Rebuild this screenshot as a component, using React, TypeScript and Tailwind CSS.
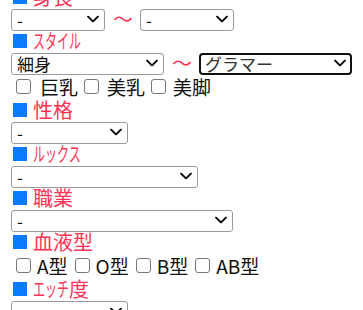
import React from "react";

const Heading = ({ children }: { children: React.ReactNode }) => (
  <div className="flex items-center h-[22px] pl-[13px]">
    <span className="block w-[14px] h-[14px] bg-[#0a7aff]" />
    <span className="ml-[6px] flex items-center text-[20px] leading-[22px] text-[#ff3355]">{children}</span>
  </div>
);

const Chevron = () => (
  <svg
    className="pointer-events-none absolute right-[6px] top-1/2 -translate-y-1/2"
    width="12"
    height="7"
    viewBox="0 0 12 7"
  >
    <path d="M1 1l5 5 5-5" stroke="#111" strokeWidth="1.8" fill="none" strokeLinecap="round" strokeLinejoin="round" />
  </svg>
);

const Select = ({ w, value, focused }: { w: string; value: string; focused?: boolean }) => (
  <div className={`relative h-[22px] ${w}`}>
    <select
      defaultValue={value}
      className={
        focused
          ? "appearance-none w-full h-full bg-white border-2 border-[#111] rounded-[4px] pl-[4px] text-[17px] leading-[18px] text-[#333] outline-none"
          : "appearance-none w-full h-full bg-white border border-[#9a9a9a] rounded-[3px] pl-[5px] text-[17px] leading-[18px] text-[#111] outline-none"
      }
    >
      <option>{value}</option>
    </select>
    <Chevron />
  </div>
);

const Tilde = () => (
  <span className="mx-[8px] w-[19px] text-center text-[20px] leading-[22px] text-[#ff3355]">〜</span>
);

const Check = ({ label, gap, next }: { label: string; gap: string; next?: boolean }) => (
  <label className={`flex items-center ${next ? "ml-[6px]" : ""}`}>
    <input
      type="checkbox"
      className="appearance-none shrink-0 w-[15px] h-[15px] bg-white border border-[#767676] rounded-[3px]"
    />
    <span className={`${gap} text-[19px] leading-[25px] text-[#111]`}>{label}</span>
  </label>
);

// narrow katakana, drawn as full-width glyphs squeezed sideways
const Narrow = ({ children, w }: { children: React.ReactNode; w: string }) => (
  <span className={`inline-block overflow-visible whitespace-nowrap ${w}`}>
    <span className="inline-block origin-left scale-x-[0.6]">{children}</span>
  </span>
);

export default function App() {
  return (
    <div className="w-[363px] h-[310px] overflow-hidden bg-white font-['Noto_Sans_CJK_JP','Noto_Sans',sans-serif]">
      <div className="-mt-[14px]">
        <Heading>身長</Heading>
        <div className="flex items-center pl-[11px]">
          <Select w="w-[94px]" value="-" />
          <Tilde />
          <Select w="w-[94px]" value="-" />
        </div>

        <Heading>
          <Narrow w="w-[48px]">スタイル</Narrow>
        </Heading>
        <div className="flex items-center pl-[11px]">
          <Select w="w-[153px]" value="細身" />
          <Tilde />
          <Select w="w-[153px]" value="グラマー" focused />
        </div>
        <div className="flex items-center h-[25px] pl-[16px]">
          <Check label="巨乳" gap="ml-[9px]" />
          <Check label="美乳" gap="ml-[8px]" next />
          <Check label="美脚" gap="ml-[7px]" next />
        </div>

        <Heading>性格</Heading>
        <div className="pl-[11px]">
          <Select w="w-[117px]" value="-" />
        </div>

        <Heading>
          <Narrow w="w-[48px]">ルックス</Narrow>
        </Heading>
        <div className="pl-[11px]">
          <Select w="w-[187px]" value="-" />
        </div>

        <Heading>職業</Heading>
        <div className="pl-[11px]">
          <Select w="w-[222px]" value="-" />
        </div>

        <Heading>血液型</Heading>
        <div className="flex items-center h-[25px] pl-[16px] gap-[7px]">
          <Check label="A型" gap="ml-[6px]" />
          <Check label="O型" gap="ml-[6px]" />
          <Check label="B型" gap="ml-[6px]" />
          <Check label="AB型" gap="ml-[6px]" />
        </div>

        <Heading>
          <Narrow w="w-[36px]">エッチ</Narrow>度
        </Heading>
        <div className="pl-[11px]">
          <Select w="w-[117px]" value="-" />
        </div>
      </div>
    </div>
  );
}
